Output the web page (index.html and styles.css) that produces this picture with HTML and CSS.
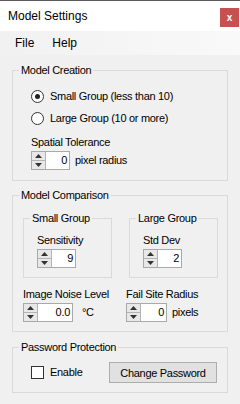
FILE: index.html
```html
<!DOCTYPE html>
<html lang="en">
<head>
    <meta charset="UTF-8">
    <meta name="viewport" content="width=device-width, initial-scale=1.0">
    <title>Model Settings</title>
    <link rel="stylesheet" href="styles.css">
</head>
<body>
<div class="window">
    <div class="titlebar">
        <span class="title">Model Settings</span>
        <span class="close">x</span>
    </div>
    <div class="menubar">
        <span class="menu-item">File</span>
        <span class="menu-item">Help</span>
    </div>

    <fieldset class="group creation">
        <legend>Model Creation</legend>
        <div class="creation-body">
            <div class="radio-row"><span class="radio checked"></span><span>Small Group (less than 10)</span></div>
            <div class="radio-row"><span class="radio"></span><span>Large Group (10 or more)</span></div>
            <div class="field-label spaced">Spatial Tolerance</div>
            <div class="field-row">
                <div class="spin w39">
                    <div class="spin-btns">
                        <span class="spin-btn"><svg width="7" height="4" viewBox="0 0 7 4"><polygon points="0,4 7,4 3.5,0" fill="#333"/></svg></span>
                        <span class="spin-btn"><svg width="7" height="4" viewBox="0 0 7 4"><polygon points="0,0 7,0 3.5,4" fill="#333"/></svg></span>
                    </div>
                    <span class="spin-val">0</span>
                </div>
                <span>pixel radius</span>
            </div>
        </div>
    </fieldset>

    <fieldset class="group comparison">
        <legend>Model Comparison</legend>
        <div class="sub-row">
            <fieldset class="group sub">
                <legend>Small Group</legend>
                <div class="sub-body">
                    <div class="field-label">Sensitivity</div>
                    <div class="spin w39">
                        <div class="spin-btns">
                            <span class="spin-btn"><svg width="7" height="4" viewBox="0 0 7 4"><polygon points="0,4 7,4 3.5,0" fill="#333"/></svg></span>
                            <span class="spin-btn"><svg width="7" height="4" viewBox="0 0 7 4"><polygon points="0,0 7,0 3.5,4" fill="#333"/></svg></span>
                        </div>
                        <span class="spin-val">9</span>
                    </div>
                </div>
            </fieldset>
            <fieldset class="group sub">
                <legend>Large Group</legend>
                <div class="sub-body">
                    <div class="field-label">Std Dev</div>
                    <div class="spin w39">
                        <div class="spin-btns">
                            <span class="spin-btn"><svg width="7" height="4" viewBox="0 0 7 4"><polygon points="0,4 7,4 3.5,0" fill="#333"/></svg></span>
                            <span class="spin-btn"><svg width="7" height="4" viewBox="0 0 7 4"><polygon points="0,0 7,0 3.5,4" fill="#333"/></svg></span>
                        </div>
                        <span class="spin-val">2</span>
                    </div>
                </div>
            </fieldset>
        </div>
        <div class="noise-row">
            <div class="noise-col">
                <div class="field-label">Image Noise Level</div>
                <div class="field-row">
                    <div class="spin w50">
                        <div class="spin-btns">
                            <span class="spin-btn"><svg width="7" height="4" viewBox="0 0 7 4"><polygon points="0,4 7,4 3.5,0" fill="#333"/></svg></span>
                            <span class="spin-btn"><svg width="7" height="4" viewBox="0 0 7 4"><polygon points="0,0 7,0 3.5,4" fill="#333"/></svg></span>
                        </div>
                        <span class="spin-val">0.0</span>
                    </div>
                    <span class="unit">°C</span>
                </div>
            </div>
            <div class="radius-col">
                <div class="field-label">Fail Site Radius</div>
                <div class="field-row">
                    <div class="spin w41">
                        <div class="spin-btns">
                            <span class="spin-btn"><svg width="7" height="4" viewBox="0 0 7 4"><polygon points="0,4 7,4 3.5,0" fill="#333"/></svg></span>
                            <span class="spin-btn"><svg width="7" height="4" viewBox="0 0 7 4"><polygon points="0,0 7,0 3.5,4" fill="#333"/></svg></span>
                        </div>
                        <span class="spin-val">0</span>
                    </div>
                    <span>pixels</span>
                </div>
            </div>
        </div>
    </fieldset>

    <fieldset class="group password">
        <legend>Password Protection</legend>
        <div class="password-row">
            <div class="check-row"><span class="checkbox"></span><span>Enable</span></div>
            <button class="btn">Change Password</button>
        </div>
    </fieldset>
</div>
</body>
</html>
```

FILE: styles.css
```css
/* WinForms style settings dialog */
body {
    margin: 0;
    background-color: #f0f0f0;
    font-family: "Liberation Sans", Arial, sans-serif;
    font-size: 11px;
    line-height: 13px;
    letter-spacing: -0.3px;
    color: #000;
}
.window {
    width: 240px;
    height: 404px;
    overflow: hidden;
}
.titlebar {
    display: flex;
    justify-content: space-between;
    align-items: flex-start;
    height: 30px;
    border-top: 1px solid #5b5b5b;
    background-color: #fff;
}
.title {
    font-size: 12px;
    line-height: 14px;
    letter-spacing: 0;
    padding: 8px 0 0 8px;
}
.close {
    display: flex;
    align-items: center;
    justify-content: center;
    width: 19px;
    height: 19px;
    margin: 7px 1px 0 0;
    background-color: #c75050;
    color: #fff;
    font-size: 10px;
    font-weight: bold;
    letter-spacing: 0;
}
.menubar {
    display: flex;
    gap: 18px;
    height: 24px;
    padding-left: 15px;
    background: linear-gradient(to right, #f1f1f1, #f9f9f9);
    font-size: 12px;
    line-height: 24px;
    letter-spacing: 0;
}
.group {
    margin: 9px 12px 0;
    padding: 0;
    min-width: 0;
    border: 1px solid #dadada;
}
.group legend {
    margin-left: 6px;
    padding: 0 2px;
    line-height: 13px;
}
.comparison {
    margin-top: 8px;
}
.creation-body {
    padding: 8px 0 10px 18px;
}
.radio-row, .check-row {
    display: flex;
    align-items: center;
    gap: 6px;
    height: 22px;
}
.radio {
    display: flex;
    align-items: center;
    justify-content: center;
    width: 11px;
    height: 11px;
    border: 1px solid #333;
    border-radius: 50%;
    background-color: #fff;
}
.radio.checked::after {
    content: "";
    width: 5px;
    height: 5px;
    border-radius: 50%;
    background-color: #222;
}
.field-label {
    margin-bottom: 2px;
}
.field-label.spaced {
    margin-top: 7px;
}
.field-row {
    display: flex;
    align-items: center;
    gap: 5px;
}
.spin {
    display: flex;
    box-sizing: border-box;
    height: 19px;
    border: 1px solid #a9a9a9;
    background-color: #fff;
}
.w39 { width: 39px; }
.w41 { width: 41px; }
.w50 { width: 50px; }
.spin-btns {
    display: flex;
    flex-direction: column;
    width: 13px;
    border-right: 1px solid #b4b4b4;
    background-color: #e8e8e8;
}
.spin-btn {
    flex: 1;
    display: flex;
    align-items: center;
    justify-content: center;
}
.spin-btn + .spin-btn {
    border-top: 1px solid #b4b4b4;
}
.spin-val {
    flex: 1;
    padding-right: 2px;
    text-align: right;
    line-height: 17px;
}
.sub-row {
    display: flex;
    gap: 17px;
    margin-top: 10px;
    padding: 0 9px 0 10px;
}
.group.sub {
    margin: 0;
    width: 89px;
    box-sizing: border-box;
}
.sub-body {
    padding: 9px 0 9px 13px;
}
.noise-row {
    display: flex;
    padding: 10px 0 9px 10px;
}
.noise-col {
    width: 103px;
}
.unit {
    margin-left: 4px;
}
.password {
    margin-top: 9px;
}
.password-row {
    display: flex;
    align-items: center;
    height: 21px;
    padding: 8px 0 9px 18px;
}
.check-row {
    width: 78px;
}
.checkbox {
    width: 11px;
    height: 11px;
    border: 1px solid #333;
    background-color: #fff;
}
.btn {
    width: 108px;
    height: 21px;
    padding: 0;
    border: 1px solid #adadad;
    background-color: #e1e1e1;
    font-family: inherit;
    font-size: 11px;
    letter-spacing: -0.3px;
    color: #000;
}
```
